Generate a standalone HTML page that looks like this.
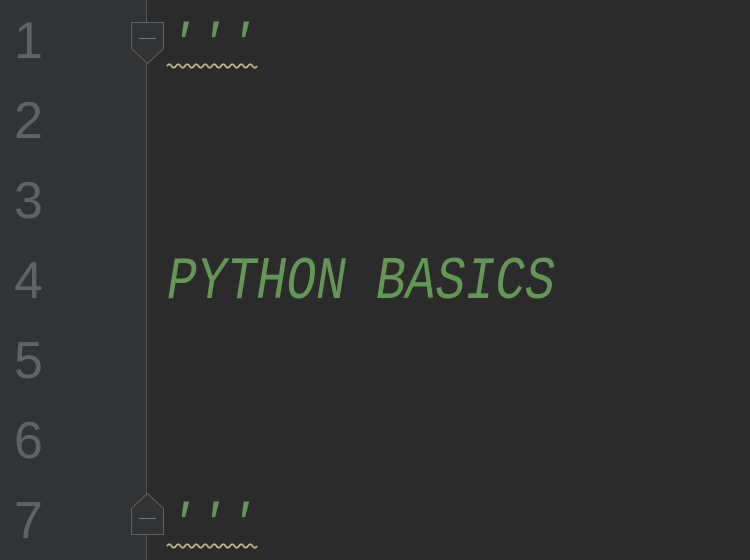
<!DOCTYPE html>
<html><head><meta charset="utf-8"><style>
html,body{margin:0;padding:0;background:#2b2b2b;width:750px;height:560px;overflow:hidden}
svg{display:block}
</style></head><body>
<svg width="750" height="560" viewBox="0 0 750 560" xmlns="http://www.w3.org/2000/svg">
<rect x="0" y="0" width="750" height="560" fill="#2b2b2b"/>
<rect x="0" y="0" width="146" height="560" fill="#313335"/>
<line x1="146.5" y1="0" x2="146.5" y2="560" stroke="#555555" stroke-width="1"/>
<g font-family="Liberation Sans, sans-serif" font-size="52" fill="#606366">
<text x="14" y="58">1</text>
<text x="14" y="138">2</text>
<text x="14" y="218">3</text>
<text x="14" y="298">4</text>
<text x="14" y="378">5</text>
<text x="14" y="458">6</text>
<text x="14" y="538">7</text>
</g>
<path d="M131.5 22.5 H163.5 V48.5 L147.5 63.5 L131.5 48.5 Z" fill="#313335" stroke="#616161" stroke-width="1"/>
<line x1="139" y1="38.5" x2="156" y2="38.5" stroke="#777" stroke-width="1"/>
<path d="M131.5 534.5 H163.5 V508.5 L147.5 493.5 L131.5 508.5 Z" fill="#313335" stroke="#616161" stroke-width="1"/>
<line x1="139" y1="518.5" x2="156" y2="518.5" stroke="#777" stroke-width="1"/>
<g font-family="Liberation Mono, monospace" font-style="italic" font-size="50" fill="#629755">
<text x="167" y="58" textLength="90" lengthAdjust="spacingAndGlyphs">'''</text>
<text x="167" y="538" textLength="90" lengthAdjust="spacingAndGlyphs">'''</text>
</g>
<text x="167" y="298" font-family="Liberation Mono, monospace" font-style="italic" font-size="60" fill="#629755" textLength="388" lengthAdjust="spacingAndGlyphs">PYTHON BASICS</text>
<path d="M167 66 q2.25 -3.5 4.5 0 t4.5 0 t4.5 0 t4.5 0 t4.5 0 t4.5 0 t4.5 0 t4.5 0 t4.5 0 t4.5 0 t4.5 0 t4.5 0 t4.5 0 t4.5 0 t4.5 0 t4.5 0 t4.5 0 t4.5 0 t4.5 0 t4.5 0" fill="none" stroke="#bbb58a" stroke-width="1.8"/>
<path d="M167 546 q2.25 -3.5 4.5 0 t4.5 0 t4.5 0 t4.5 0 t4.5 0 t4.5 0 t4.5 0 t4.5 0 t4.5 0 t4.5 0 t4.5 0 t4.5 0 t4.5 0 t4.5 0 t4.5 0 t4.5 0 t4.5 0 t4.5 0 t4.5 0 t4.5 0" fill="none" stroke="#bbb58a" stroke-width="1.8"/>
</svg>
</body></html>
